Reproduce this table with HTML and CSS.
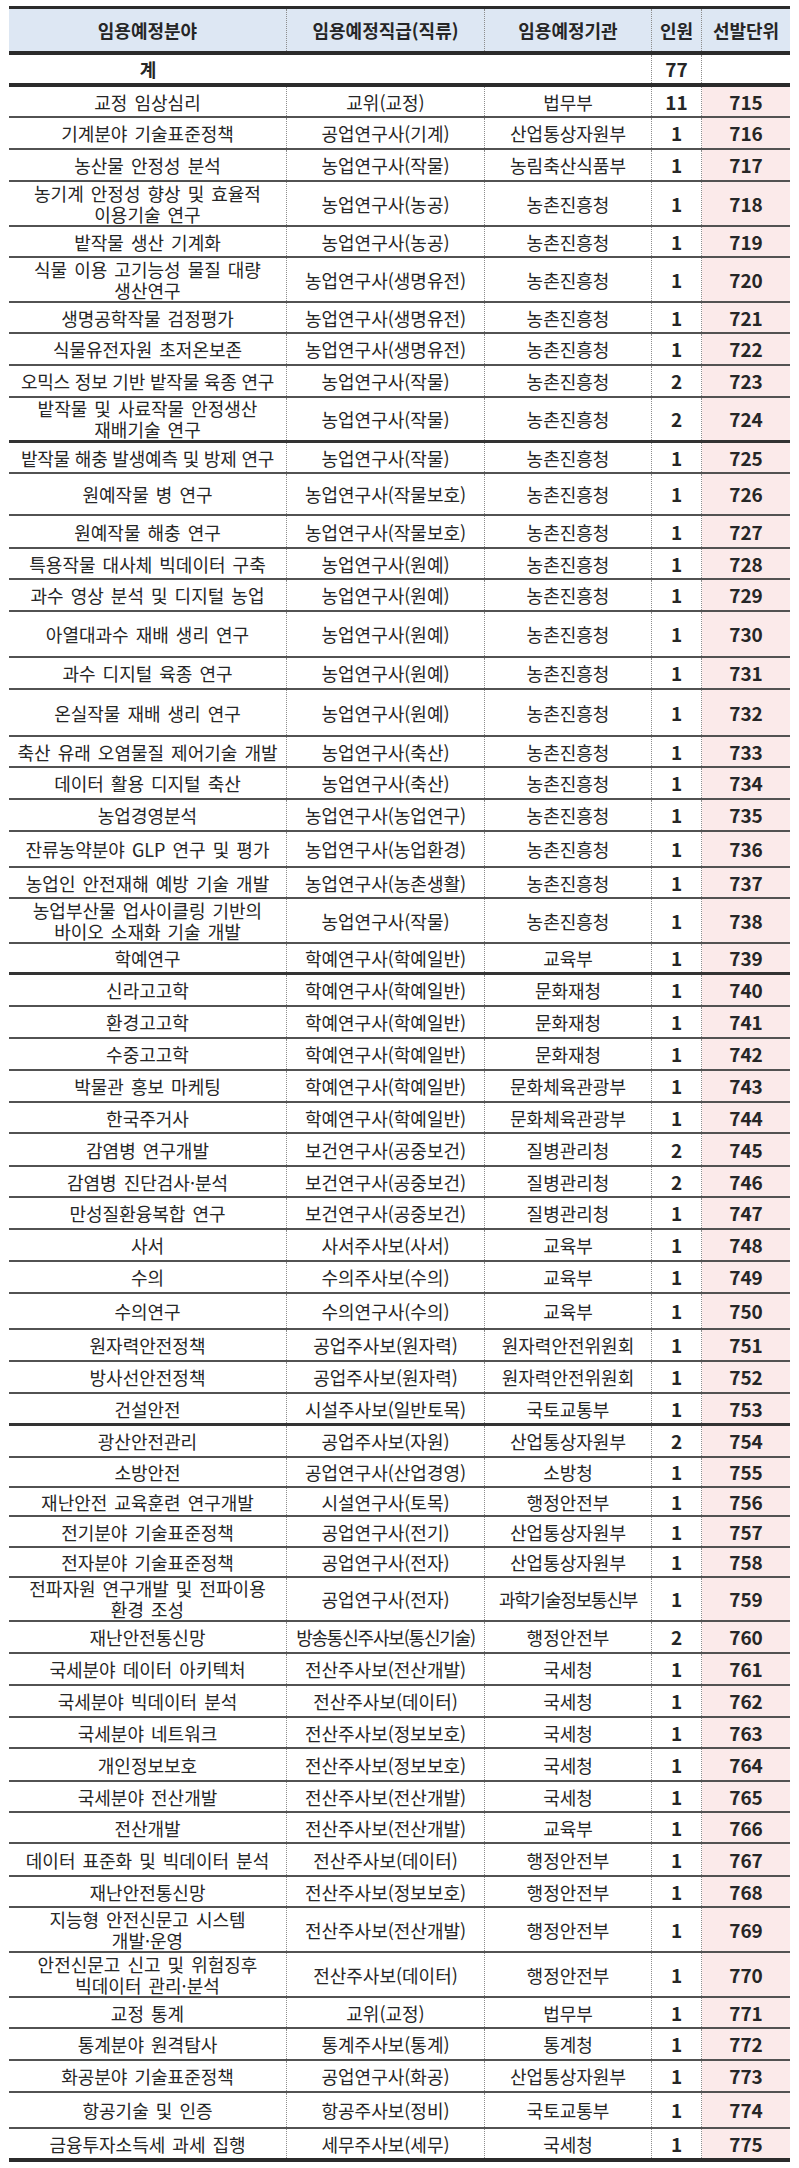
FILE: index.html
```html
<!DOCTYPE html>
<html lang="ko">
<head>
<meta charset="utf-8">
<title>임용예정분야</title>
<link rel="stylesheet" href="styles.css">
</head>
<body>
<div class="tbl">
  <div class="row head">
    <div class="c">임용예정분야</div><div class="c">임용예정직급(직류)</div><div class="c">임용예정기관</div><div class="c">인원</div><div class="c last">선발단위</div>
  </div>
  <div class="row total">
    <div class="c nb tb">계</div><div class="c nb"></div><div class="c"></div><div class="c num">77</div><div class="c last"></div>
  </div>
  <div class="row h31"><div class="c">교정 임상심리</div><div class="c">교위(교정)</div><div class="c">법무부</div><div class="c num">11</div><div class="c last unit">715</div></div>
  <div class="row"><div class="c">기계분야 기술표준정책</div><div class="c">공업연구사(기계)</div><div class="c">산업통상자원부</div><div class="c num">1</div><div class="c last unit">716</div></div>
  <div class="row"><div class="c">농산물 안정성 분석</div><div class="c">농업연구사(작물)</div><div class="c">농림축산식품부</div><div class="c num">1</div><div class="c last unit">717</div></div>
  <div class="row h45"><div class="c two">농기계 안정성 향상 및 효율적<br>이용기술 연구</div><div class="c">농업연구사(농공)</div><div class="c">농촌진흥청</div><div class="c num">1</div><div class="c last unit">718</div></div>
  <div class="row h31"><div class="c">밭작물 생산 기계화</div><div class="c">농업연구사(농공)</div><div class="c">농촌진흥청</div><div class="c num">1</div><div class="c last unit">719</div></div>
  <div class="row h45"><div class="c two">식물 이용 고기능성 물질 대량<br>생산연구</div><div class="c">농업연구사(생명유전)</div><div class="c">농촌진흥청</div><div class="c num">1</div><div class="c last unit">720</div></div>
  <div class="row h31"><div class="c">생명공학작물 검정평가</div><div class="c">농업연구사(생명유전)</div><div class="c">농촌진흥청</div><div class="c num">1</div><div class="c last unit">721</div></div>
  <div class="row"><div class="c">식물유전자원 초저온보존</div><div class="c">농업연구사(생명유전)</div><div class="c">농촌진흥청</div><div class="c num">1</div><div class="c last unit">722</div></div>
  <div class="row"><div class="c snug">오믹스 정보 기반 밭작물 육종 연구</div><div class="c">농업연구사(작물)</div><div class="c">농촌진흥청</div><div class="c num">2</div><div class="c last unit">723</div></div>
  <div class="row h45 sep"><div class="c two">밭작물 및 사료작물 안정생산<br>재배기술 연구</div><div class="c">농업연구사(작물)</div><div class="c">농촌진흥청</div><div class="c num">2</div><div class="c last unit">724</div></div>
  <div class="row h31"><div class="c snug">밭작물 해충 발생예측 및 방제 연구</div><div class="c">농업연구사(작물)</div><div class="c">농촌진흥청</div><div class="c num">1</div><div class="c last unit">725</div></div>
  <div class="row h42"><div class="c">원예작물 병 연구</div><div class="c">농업연구사(작물보호)</div><div class="c">농촌진흥청</div><div class="c num">1</div><div class="c last unit">726</div></div>
  <div class="row h33"><div class="c">원예작물 해충 연구</div><div class="c">농업연구사(작물보호)</div><div class="c">농촌진흥청</div><div class="c num">1</div><div class="c last unit">727</div></div>
  <div class="row h31"><div class="c">특용작물 대사체 빅데이터 구축</div><div class="c">농업연구사(원예)</div><div class="c">농촌진흥청</div><div class="c num">1</div><div class="c last unit">728</div></div>
  <div class="row"><div class="c">과수 영상 분석 및 디지털 농업</div><div class="c">농업연구사(원예)</div><div class="c">농촌진흥청</div><div class="c num">1</div><div class="c last unit">729</div></div>
  <div class="row h46"><div class="c">아열대과수 재배 생리 연구</div><div class="c">농업연구사(원예)</div><div class="c">농촌진흥청</div><div class="c num">1</div><div class="c last unit">730</div></div>
  <div class="row"><div class="c">과수 디지털 육종 연구</div><div class="c">농업연구사(원예)</div><div class="c">농촌진흥청</div><div class="c num">1</div><div class="c last unit">731</div></div>
  <div class="row h47"><div class="c">온실작물 재배 생리 연구</div><div class="c">농업연구사(원예)</div><div class="c">농촌진흥청</div><div class="c num">1</div><div class="c last unit">732</div></div>
  <div class="row h31"><div class="c">축산 유래 오염물질 제어기술 개발</div><div class="c">농업연구사(축산)</div><div class="c">농촌진흥청</div><div class="c num">1</div><div class="c last unit">733</div></div>
  <div class="row"><div class="c">데이터 활용 디지털 축산</div><div class="c">농업연구사(축산)</div><div class="c">농촌진흥청</div><div class="c num">1</div><div class="c last unit">734</div></div>
  <div class="row"><div class="c">농업경영분석</div><div class="c">농업연구사(농업연구)</div><div class="c">농촌진흥청</div><div class="c num">1</div><div class="c last unit">735</div></div>
  <div class="row h36"><div class="c">잔류농약분야 GLP 연구 및 평가</div><div class="c">농업연구사(농업환경)</div><div class="c">농촌진흥청</div><div class="c num">1</div><div class="c last unit">736</div></div>
  <div class="row h31"><div class="c">농업인 안전재해 예방 기술 개발</div><div class="c">농업연구사(농촌생활)</div><div class="c">농촌진흥청</div><div class="c num">1</div><div class="c last unit">737</div></div>
  <div class="row h45"><div class="c two">농업부산물 업사이클링 기반의<br>바이오 소재화 기술 개발</div><div class="c">농업연구사(작물)</div><div class="c">농촌진흥청</div><div class="c num">1</div><div class="c last unit">738</div></div>
  <div class="row h31 sep"><div class="c">학예연구</div><div class="c">학예연구사(학예일반)</div><div class="c">교육부</div><div class="c num">1</div><div class="c last unit">739</div></div>
  <div class="row"><div class="c">신라고고학</div><div class="c">학예연구사(학예일반)</div><div class="c">문화재청</div><div class="c num">1</div><div class="c last unit">740</div></div>
  <div class="row"><div class="c">환경고고학</div><div class="c">학예연구사(학예일반)</div><div class="c">문화재청</div><div class="c num">1</div><div class="c last unit">741</div></div>
  <div class="row"><div class="c">수중고고학</div><div class="c">학예연구사(학예일반)</div><div class="c">문화재청</div><div class="c num">1</div><div class="c last unit">742</div></div>
  <div class="row"><div class="c">박물관 홍보 마케팅</div><div class="c">학예연구사(학예일반)</div><div class="c">문화체육관광부</div><div class="c num">1</div><div class="c last unit">743</div></div>
  <div class="row h31"><div class="c">한국주거사</div><div class="c">학예연구사(학예일반)</div><div class="c">문화체육관광부</div><div class="c num">1</div><div class="c last unit">744</div></div>
  <div class="row h33"><div class="c">감염병 연구개발</div><div class="c">보건연구사(공중보건)</div><div class="c">질병관리청</div><div class="c num">2</div><div class="c last unit">745</div></div>
  <div class="row h31"><div class="c">감염병 진단검사·분석</div><div class="c">보건연구사(공중보건)</div><div class="c">질병관리청</div><div class="c num">2</div><div class="c last unit">746</div></div>
  <div class="row"><div class="c">만성질환융복합 연구</div><div class="c">보건연구사(공중보건)</div><div class="c">질병관리청</div><div class="c num">1</div><div class="c last unit">747</div></div>
  <div class="row"><div class="c">사서</div><div class="c">사서주사보(사서)</div><div class="c">교육부</div><div class="c num">1</div><div class="c last unit">748</div></div>
  <div class="row"><div class="c">수의</div><div class="c">수의주사보(수의)</div><div class="c">교육부</div><div class="c num">1</div><div class="c last unit">749</div></div>
  <div class="row h36"><div class="c">수의연구</div><div class="c">수의연구사(수의)</div><div class="c">교육부</div><div class="c num">1</div><div class="c last unit">750</div></div>
  <div class="row"><div class="c">원자력안전정책</div><div class="c">공업주사보(원자력)</div><div class="c">원자력안전위원회</div><div class="c num">1</div><div class="c last unit">751</div></div>
  <div class="row"><div class="c">방사선안전정책</div><div class="c">공업주사보(원자력)</div><div class="c">원자력안전위원회</div><div class="c num">1</div><div class="c last unit">752</div></div>
  <div class="row sep"><div class="c">건설안전</div><div class="c">시설주사보(일반토목)</div><div class="c">국토교통부</div><div class="c num">1</div><div class="c last unit">753</div></div>
  <div class="row"><div class="c">광산안전관리</div><div class="c">공업주사보(자원)</div><div class="c">산업통상자원부</div><div class="c num">2</div><div class="c last unit">754</div></div>
  <div class="row h30"><div class="c">소방안전</div><div class="c">공업연구사(산업경영)</div><div class="c">소방청</div><div class="c num">1</div><div class="c last unit">755</div></div>
  <div class="row h29"><div class="c">재난안전 교육훈련 연구개발</div><div class="c">시설연구사(토목)</div><div class="c">행정안전부</div><div class="c num">1</div><div class="c last unit">756</div></div>
  <div class="row h31"><div class="c">전기분야 기술표준정책</div><div class="c">공업연구사(전기)</div><div class="c">산업통상자원부</div><div class="c num">1</div><div class="c last unit">757</div></div>
  <div class="row h30"><div class="c">전자분야 기술표준정책</div><div class="c">공업연구사(전자)</div><div class="c">산업통상자원부</div><div class="c num">1</div><div class="c last unit">758</div></div>
  <div class="row h44"><div class="c two">전파자원 연구개발 및 전파이용<br>환경 조성</div><div class="c">공업연구사(전자)</div><div class="c tight">과학기술정보통신부</div><div class="c num">1</div><div class="c last unit">759</div></div>
  <div class="row"><div class="c">재난안전통신망</div><div class="c tight">방송통신주사보(통신기술)</div><div class="c">행정안전부</div><div class="c num">2</div><div class="c last unit">760</div></div>
  <div class="row"><div class="c">국세분야 데이터 아키텍처</div><div class="c">전산주사보(전산개발)</div><div class="c">국세청</div><div class="c num">1</div><div class="c last unit">761</div></div>
  <div class="row"><div class="c">국세분야 빅데이터 분석</div><div class="c">전산주사보(데이터)</div><div class="c">국세청</div><div class="c num">1</div><div class="c last unit">762</div></div>
  <div class="row h31"><div class="c">국세분야 네트워크</div><div class="c">전산주사보(정보보호)</div><div class="c">국세청</div><div class="c num">1</div><div class="c last unit">763</div></div>
  <div class="row h33"><div class="c">개인정보보호</div><div class="c">전산주사보(정보보호)</div><div class="c">국세청</div><div class="c num">1</div><div class="c last unit">764</div></div>
  <div class="row h31"><div class="c">국세분야 전산개발</div><div class="c">전산주사보(전산개발)</div><div class="c">국세청</div><div class="c num">1</div><div class="c last unit">765</div></div>
  <div class="row h31"><div class="c">전산개발</div><div class="c">전산주사보(전산개발)</div><div class="c">교육부</div><div class="c num">1</div><div class="c last unit">766</div></div>
  <div class="row h33"><div class="c">데이터 표준화 및 빅데이터 분석</div><div class="c">전산주사보(데이터)</div><div class="c">행정안전부</div><div class="c num">1</div><div class="c last unit">767</div></div>
  <div class="row h31"><div class="c">재난안전통신망</div><div class="c">전산주사보(정보보호)</div><div class="c">행정안전부</div><div class="c num">1</div><div class="c last unit">768</div></div>
  <div class="row h45"><div class="c two">지능형 안전신문고 시스템<br>개발·운영</div><div class="c">전산주사보(전산개발)</div><div class="c">행정안전부</div><div class="c num">1</div><div class="c last unit">769</div></div>
  <div class="row h45"><div class="c two">안전신문고 신고 및 위험징후<br>빅데이터 관리·분석</div><div class="c">전산주사보(데이터)</div><div class="c">행정안전부</div><div class="c num">1</div><div class="c last unit">770</div></div>
  <div class="row h31"><div class="c">교정 통계</div><div class="c">교위(교정)</div><div class="c">법무부</div><div class="c num">1</div><div class="c last unit">771</div></div>
  <div class="row"><div class="c">통계분야 원격탐사</div><div class="c">통계주사보(통계)</div><div class="c">통계청</div><div class="c num">1</div><div class="c last unit">772</div></div>
  <div class="row"><div class="c">화공분야 기술표준정책</div><div class="c">공업연구사(화공)</div><div class="c">산업통상자원부</div><div class="c num">1</div><div class="c last unit">773</div></div>
  <div class="row h36"><div class="c">항공기술 및 인증</div><div class="c">항공주사보(정비)</div><div class="c">국토교통부</div><div class="c num">1</div><div class="c last unit">774</div></div>
  <div class="row end"><div class="c">금융투자소득세 과세 집행</div><div class="c">세무주사보(세무)</div><div class="c">국세청</div><div class="c num">1</div><div class="c last unit">775</div></div>
</div>
</body>
</html>
```

FILE: styles.css
```css
html, body {
  margin: 0;
  padding: 0;
  background: #ffffff;
}

body {
  font-family: "Noto Sans CJK KR", "Noto Sans", sans-serif;
  color: #262626;
}

.tbl {
  width: 781px;
  margin: 6px 0 0 9px;
}

.row {
  display: grid;
  grid-template-columns: 278px 198px 167px 50px 88px;
  height: 32px;
  box-sizing: border-box;
  border-bottom: 2px solid #525252;
}

.row.h29 { height: 29px; }
.row.h30 { height: 30px; }
.row.h31 { height: 31px; }
.row.h33 { height: 33px; }
.row.h36 { height: 36px; }
.row.h42 { height: 42px; }
.row.h44 { height: 44px; }
.row.h45 { height: 45px; }
.row.h46 { height: 46px; }
.row.h47 { height: 47px; }

.row.sep {
  border-bottom: 3px solid #333333;
}

.row.head {
  height: 49px;
  border-top: 3px solid #2b2b2b;
  border-bottom: 4px solid #2b2b2b;
  background: #dde7f3;
}

.row.head .c {
  font-weight: bold;
}

.row.total {
  height: 32px;
  border-bottom: 4px solid #2b2b2b;
}

.row.end {
  height: 33px;
  border-bottom: 4px solid #2b2b2b;
}

.c {
  display: flex;
  align-items: center;
  justify-content: center;
  text-align: center;
  white-space: nowrap;
  font-size: 18px;
  line-height: 20px;
  letter-spacing: 0;
  word-spacing: 2px;
  border-right: 1px dotted #8c8c8c;
  box-sizing: border-box;
}

.c.two {
  line-height: 21px;
}

.c.snug {
  word-spacing: 0;
  letter-spacing: -0.2px;
}

.c.nb {
  border-right: none;
}

.c.tb {
  font-weight: bold;
}

.c.last {
  border-right: none;
}

.c.num {
  font-weight: bold;
  font-size: 19px;
}

.c.unit {
  background: #fbeaea;
  font-weight: bold;
  font-size: 19px;
}

.c.tight {
  letter-spacing: -1.2px;
}
```
